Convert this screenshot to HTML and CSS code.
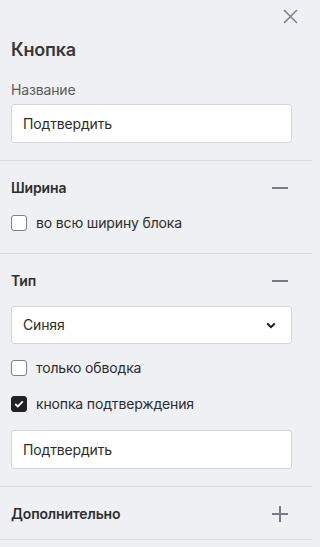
FILE: index.html
```html
<!DOCTYPE html>
<html lang="ru">
<head>
<meta charset="utf-8">
<title>Кнопка</title>
<link rel="stylesheet" href="styles.css">
</head>
<body>
<div class="panel">
  <div class="topbar">
    <button class="close" aria-label="Закрыть">
      <svg width="15" height="15" viewBox="0 0 15 15"><path d="M1 1L14 14M14 1L1 14" stroke="#7a7f8c" stroke-width="1.5" fill="none"/></svg>
    </button>
  </div>
  <section class="section first">
    <h1 class="title">Кнопка</h1>
    <div class="label">Название</div>
    <div class="field">Подтвердить</div>
  </section>
  <section class="section">
    <div class="head"><span>Ширина</span><span class="icon minus"></span></div>
    <label class="check c-width"><span class="box"></span><span>во всю ширину блока</span></label>
  </section>
  <section class="section">
    <div class="head"><span>Тип</span><span class="icon minus"></span></div>
    <div class="field select">
      <span>Синяя</span>
      <svg width="10" height="7" viewBox="0 0 10 7"><path d="M1.2 1.5L5 5.2L8.8 1.5" stroke="#1e1e1e" stroke-width="2" fill="none"/></svg>
    </div>
    <label class="check c-outline"><span class="box"></span><span>только обводка</span></label>
    <label class="check c-confirm"><span class="box on"><svg width="10" height="8" viewBox="0 0 10 8"><path d="M1.2 4L3.8 6.4L8.8 1.4" stroke="#fff" stroke-width="1.8" fill="none"/></svg></span><span>кнопка подтверждения</span></label>
    <div class="field f-confirm">Подтвердить</div>
  </section>
  <section class="section last">
    <div class="head"><span>Дополнительно</span><span class="icon plus"></span></div>
  </section>
</div>
</body>
</html>
```

FILE: styles.css
```css
html, body {
  margin: 0;
  padding: 0;
  background: #eff0f4;
}
body {
  font-family: Inter, "Noto Sans", sans-serif;
  color: #333333;
  font-size: 14px;
  line-height: 20px;
  letter-spacing: -0.15px;
}
.panel {
  width: 312px;
}
.topbar {
  height: 32px;
  display: flex;
  justify-content: flex-end;
  align-items: center;
  padding-right: 14px;
}
.close {
  border: 0;
  background: none;
  padding: 0;
  width: 15px;
  height: 15px;
  display: flex;
}
.section {
  padding: 17px 20px 17px 11px;
  border-bottom: 1px solid #d9dce3;
}
.section.first {
  padding-top: 7px;
}
.section.last {
  padding-bottom: 15px;
}
.title {
  margin: 0;
  font-size: 18px;
  line-height: 22px;
  font-weight: 600;
  color: #383838;
  letter-spacing: -0.2px;
}
.label {
  margin-top: 19px;
  color: #5a5a5a;
}
.field {
  margin-top: 4px;
  height: 37px;
  border: 1px solid #d3d6dd;
  border-radius: 3px;
  background: #ffffff;
  padding: 0 11px;
  display: flex;
  align-items: center;
  color: #2c2c2c;
}
.select {
  margin-top: 15px;
  height: 36px;
  justify-content: space-between;
  padding-right: 15px;
}
.head {
  display: flex;
  justify-content: space-between;
  align-items: center;
  font-weight: 600;
  color: #2e2e2e;
  height: 20px;
}
.icon {
  position: relative;
  width: 16px;
  height: 16px;
  margin-right: 4px;
}
.icon::before, .plus::after {
  content: "";
  position: absolute;
  left: 0;
  top: 7px;
  width: 16px;
  height: 1.5px;
  background: #767b87;
}
.plus::after {
  left: 7.25px;
  top: 0;
  width: 1.5px;
  height: 16px;
}
.check {
  display: flex;
  align-items: center;
  gap: 9px;
  height: 20px;
  color: #2c2c2c;
}
.c-width {
  margin-top: 15px;
  margin-bottom: 3px;
}
.c-outline {
  margin-top: 14px;
}
.c-confirm {
  margin-top: 16px;
}
.f-confirm {
  margin-top: 16px;
}
.box {
  width: 14px;
  height: 14px;
  border: 1px solid #7c8292;
  border-radius: 3px;
  background: #ffffff;
  display: flex;
  align-items: center;
  justify-content: center;
  flex: none;
}
.box.on {
  background: #222222;
  border-color: #222222;
}
```
